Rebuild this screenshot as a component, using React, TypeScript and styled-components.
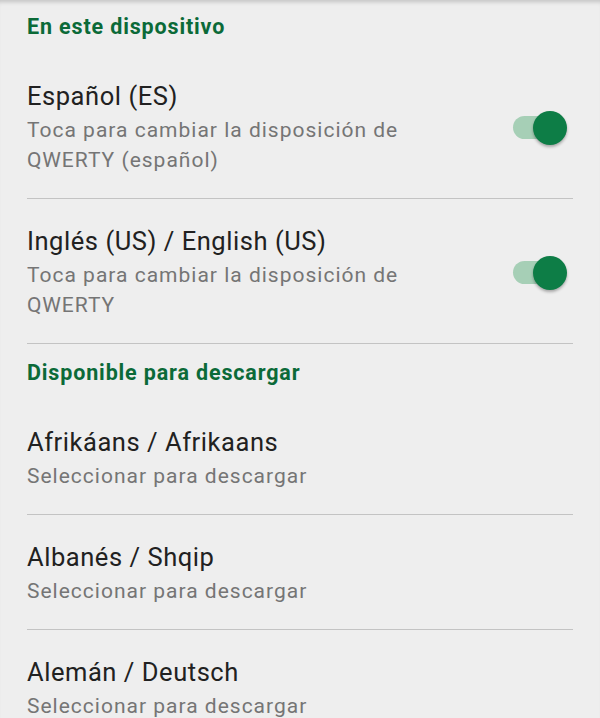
import styled, { createGlobalStyle } from "styled-components";

const GlobalStyle = createGlobalStyle`
  html, body {
    margin: 0;
    padding: 0;
    background: #eeeeee;
  }
  body {
    font-family: Roboto, "Noto Sans", sans-serif;
    -webkit-font-smoothing: antialiased;
  }
`;

type Language = {
  title: string;
  subtitle: string;
  enabled?: boolean;
};

const installed: Language[] = [
  {
    title: "Español (ES)",
    subtitle: "Toca para cambiar la disposición de QWERTY (español)",
    enabled: true,
  },
  {
    title: "Inglés (US) / English (US)",
    subtitle: "Toca para cambiar la disposición de QWERTY",
    enabled: true,
  },
];

const available: Language[] = [
  { title: "Afrikáans / Afrikaans", subtitle: "Seleccionar para descargar" },
  { title: "Albanés / Shqip", subtitle: "Seleccionar para descargar" },
  { title: "Alemán / Deutsch", subtitle: "Seleccionar para descargar" },
];

const LanguageRow: React.FC<{ lang: Language; last?: boolean }> = ({ lang, last }) => {
  return (
    <Row $last={last}>
      <TextBlock>
        <Title>{lang.title}</Title>
        <Subtitle>{lang.subtitle}</Subtitle>
      </TextBlock>
      {lang.enabled !== undefined && (
        <Switch>
          <Thumb />
        </Switch>
      )}
    </Row>
  );
};

const App: React.FC = () => {
  return (
    <>
      <GlobalStyle />
      <Page>
        <SectionHeader $first>En este dispositivo</SectionHeader>
        {installed.map((l) => (
          <LanguageRow key={l.title} lang={l} />
        ))}
        <SectionHeader>Disponible para descargar</SectionHeader>
        {available.map((l, i) => (
          <LanguageRow key={l.title} lang={l} last={i === available.length - 1} />
        ))}
      </Page>
    </>
  );
};

export default App;

const Page = styled.div`
  width: 600px;
  height: 718px;
  overflow: hidden;
  background: #eeeeee;
  box-shadow: inset 0 5px 4px -3px rgba(0, 0, 0, 0.18);
`;

const SectionHeader = styled.div<{ $first?: boolean }>`
  padding: ${(p) => (p.$first ? "13px" : "15px")} 27px 13px;
  color: #0b6a38;
  font-size: 21.5px;
  font-weight: 700;
  line-height: 28px;
  letter-spacing: 0.85px;
`;

const Row = styled.div<{ $last?: boolean }>`
  display: flex;
  align-items: center;
  justify-content: space-between;
  margin: 0 27px;
  padding: 26px 6px 23px 0;
  border-bottom: 1px solid ${(p) => (p.$last ? "transparent" : "#c3c3c3")};
`;

const TextBlock = styled.div`
  display: flex;
  flex-direction: column;
`;

const Title = styled.span`
  color: #212121;
  font-size: 25.5px;
  line-height: 32px;
  letter-spacing: 0.55px;
`;

const Subtitle = styled.span`
  margin-top: 3px;
  max-width: 440px;
  color: #757575;
  font-size: 21px;
  line-height: 30px;
  letter-spacing: 1px;
`;

const Switch = styled.div`
  position: relative;
  width: 47px;
  height: 23px;
  margin-right: 7px;
  border-radius: 12px;
  background: #a6cfb6;
`;

const Thumb = styled.div`
  position: absolute;
  top: 50%;
  right: -7px;
  width: 34px;
  height: 34px;
  margin-top: -17px;
  border-radius: 50%;
  background: #0d7d46;
  box-shadow: 0 2px 3px rgba(0, 0, 0, 0.3);
`;
